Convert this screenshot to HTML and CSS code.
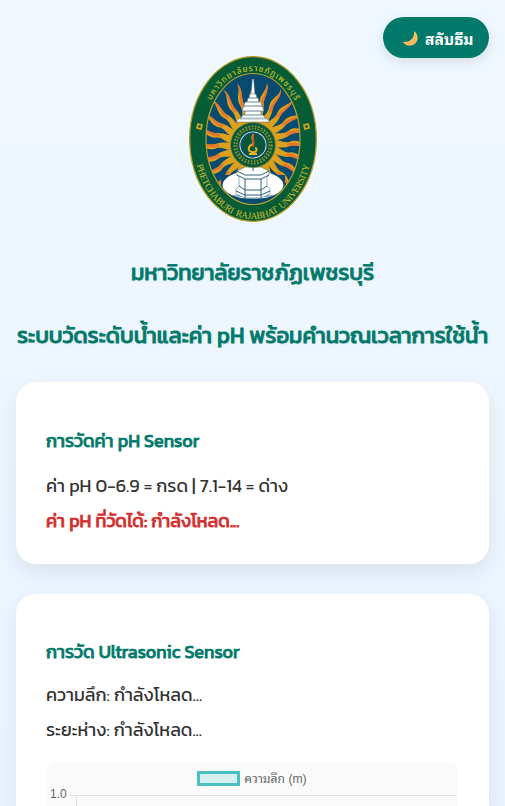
FILE: index.html
```html
<!DOCTYPE html>
<html lang="th">
<head>
<meta charset="utf-8">
<meta name="viewport" content="width=device-width, initial-scale=1">
<title>ระบบวัดระดับน้ำและค่า pH</title>
<link rel="stylesheet" href="styles.css">
</head>
<body>
<button class="theme-toggle" type="button">
  <svg class="moon" viewBox="0 0 17 17" aria-hidden="true"><path d="M12 1C19 6.500 15 15.600 7.500 15.600C4.300 15.600 2 14.200 1 11.800C8 13 12.800 8 12 1Z" fill="#ffc968"/><path d="M1 11.800C8 13.800 13.500 9 12.600 2C17.500 8.500 13 15.600 7.500 15.600C4.300 15.600 2 14.200 1 11.800Z" fill="#f6a94e" opacity=".5"/></svg>
  <span class="toggle-label">สลับธีม</span>
</button>
<header class="header">
  <svg class="emblem" viewBox="0 0 128 166" role="img">
    <defs>
      <clipPath id="inner"><ellipse cx="64" cy="83" rx="47" ry="65.500"/></clipPath>
      <path id="arcTop" d="M15.500 62A51 68 0 0 1 112.500 62"/>
      <path id="arcBottom" d="M5 95A59.500 78 0 0 0 123 95"/>
      <g id="ray">
        <path d="M-4 -18C-7 -31 0 -34 -4 -43C-6 -52 1 -56 -1 -64C4 -56 -1 -50 1 -42C4 -33 1 -29 4 -18Z" fill="#dda01a"/>
        <path d="M-1 -38C-5 -46 1 -51 -1 -64C4 -56 -1 -50 1 -38Z" fill="#e8752f"/>
      </g>
      <g id="quarter"><use href="#ray"/><use href="#ray" transform="rotate(15)"/><use href="#ray" transform="rotate(30)"/><use href="#ray" transform="rotate(45)"/><use href="#ray" transform="rotate(60)"/><use href="#ray" transform="rotate(75)"/></g>
    </defs>
    <ellipse cx="64" cy="83" rx="63.300" ry="82.300" fill="#065c35" stroke="#b59a22" stroke-width="1.300"/>
    <g clip-path="url(#inner)">
      <path d="M0 0H128V166H0Z" fill="#074b70"/>
      <g transform="translate(64 89) scale(.9 1)"><use href="#quarter"/><use href="#quarter" transform="rotate(90)"/><use href="#quarter" transform="rotate(180)"/><use href="#quarter" transform="rotate(270)"/></g>
      <path d="M32 119H96V150H32Z" fill="#074b70"/>
      <ellipse cx="64" cy="129" rx="30.500" ry="14" fill="#fff"/>
      <path d="M43 140H85M48 143H80" stroke="#074b70" stroke-width=".8"/>
    </g>
    <ellipse cx="64" cy="83" rx="47" ry="65.500" fill="none" stroke="#b9a12b" stroke-width="1.200"/>
    <g fill="#fff" stroke="#376386" stroke-width=".45">
      <path d="M63.300 23H64.700L66 39H62Z"/>
      <path d="M61 38H67L68 42H60ZM59 42H69L70 46H58ZM56 46H72L73 50H55ZM55 50H73L75 55H53ZM56 55H72V59H56ZM54 59H74L77 63H51ZM51 62H77L81 66H47Z"/>
      <path d="M48 115L56 111H72L80 115V119L78 121V130L81 133V138L72 142H56L47 138V133L50 130V121L48 119Z" stroke="#174f73"/>
      <path d="M48 115L56 119H72L80 115M48 119L56 123H72L80 119M56 123V142M72 123V142M50 130L56 134H72L78 130M47 135L56 139H72L81 135M64 111V115" fill="none" stroke="#174f73" stroke-width=".9"/>
    </g>
    <circle cx="64" cy="89" r="22.500" fill="#07583b" stroke="#7c8830" stroke-width=".7"/>
    <circle cx="64" cy="89" r="17.500" fill="none" stroke="#9c962c" stroke-width="4" stroke-dasharray="1.600 1.500"/>
    <circle cx="64" cy="89" r="17.500" fill="none" stroke="#17613a" stroke-width="1"/>
    <circle cx="64" cy="89" r="13" fill="#07583b" stroke="#d5dfdc" stroke-width="1.100"/>
    <circle cx="64" cy="89" r="11.700" fill="none" stroke="#104b75" stroke-width="1.400"/>
    <path d="M64.500 78C61 83 66 85 64 88C59 90 58 95 63 96C68 97 69 92 66 92M60 98H68" fill="none" stroke="#eeae25" stroke-width="1.900"/>
    <path d="M64.500 78C62 83 66 86 64 91" fill="none" stroke="#df4c2a" stroke-width="1.700"/>
    <g fill="none" stroke="#d9a61e" stroke-width="1.700"><path d="M9 68L13 69L12 73L8 72ZM119 68L115 69L116 73L120 72Z"/></g>
    <text class="seal-thai"><textPath href="#arcTop" startOffset="50%" text-anchor="middle" textLength="108">มหาวิทยาลัยราชภัฏเพชรบุรี</textPath></text>
    <text class="seal-latin"><textPath href="#arcBottom" startOffset="50%" text-anchor="middle" textLength="168" xml:space="preserve">PHETCHABURI  RAJABHAT  UNIVERSITY</textPath></text>
  </svg>
  <h2 class="title university">มหาวิทยาลัยราชภัฏเพชรบุรี</h2>
  <h2 class="title system">ระบบวัดระดับน้ำและค่า pH พร้อมคำนวณเวลาการใช้น้ำ</h2>
</header>
<main class="cards">
  <section class="card ph-card">
    <h3>การวัดค่า pH Sensor</h3>
    <p>ค่า pH 0-6.9 = กรด | 7.1-14 = ด่าง</p>
    <p class="reading">ค่า pH ที่วัดได้: กำลังโหลด...</p>
  </section>
  <section class="card depth-card">
    <h3>การวัด Ultrasonic Sensor</h3>
    <p>ความลึก: กำลังโหลด...</p>
    <p>ระยะห่าง: กำลังโหลด...</p>
    <div class="chart">
      <div class="legend"><i class="swatch"></i><span class="legend-label">ความลึก (m)</span></div>
      <div class="axis"><span class="tick">1.0</span><div class="plot"></div></div>
    </div>
  </section>
</main>
</body>
</html>
```

FILE: styles.css
```css
* { box-sizing: border-box; }
html { height: 100%; overflow: hidden; }
body {
  height: 806px; margin: 0; padding: 17px 16px 0; overflow: hidden;
  display: flex; flex-direction: column;
  background: linear-gradient(180deg, #f0f8ff, #eaf4ff);
  color: #333; font-family: Kanit, "Noto Sans Thai", "Noto Sans", sans-serif;
}
h2, h3, p { margin: 0; white-space: nowrap; }
.theme-toggle {
  flex: none; align-self: flex-end; width: 106px; height: 41px; padding: 0 14px 0 19px;
  display: flex; align-items: center; gap: 6px; border: 0; border-radius: 21px;
  color: #fff; background: #00796b; box-shadow: 0 4px 12px rgba(0,0,0,.1);
  font: bold 15.500px "Noto Sans Thai Looped", Loma, Garuda, "Noto Sans Thai", sans-serif; white-space: nowrap;
}
.moon { width: 17px; height: 17px; flex: none; margin-top: 2px; }
.header { flex: none; height: 326px; display: flex; flex-direction: column; align-items: center; margin-top: -2px; }
.emblem { width: 128px; height: 166px; flex: none; margin-left: 1px; }
.title { height: 63px; line-height: 63px; color: #00796b; font-size: 22.020px; font-weight: 400; -webkit-text-stroke: .85px #00796b; text-shadow: 1px 1px 2px rgba(0,0,0,.1); }
.university { margin-top: 19px; }
.seal-thai { fill: #dec72d; font: 8.500px "Noto Sans Thai", "Noto Sans", sans-serif; }
.seal-latin { fill: #d5bd29; font: 9.500px "Liberation Serif", serif; }
.cards { flex: 1; min-height: 0; display: flex; flex-direction: column; gap: 30px; }
.card { padding: 41px 30px 0; background: #fff; border-radius: 20px; box-shadow: 0 8px 20px rgba(0,0,0,.08); flex: none; }
.ph-card { height: 182px; }
.depth-card { height: 212px; padding-top: 40px; border-radius: 20px 20px 0 0; }
h3 { height: 35px; line-height: 35px; color: #00796b; font-size: 18px; font-weight: 400; -webkit-text-stroke: .75px #00796b; }
p { height: 35px; line-height: 35px; font-size: 18px; }
h3 + p { margin-top: 8px; }
.ph-card h3 + p { margin-top: 10px; }
.reading { color: #d32f2f; -webkit-text-stroke: .75px #d32f2f; }
.chart { height: 43px; overflow: hidden; margin-top: 16px; border-radius: 10px 10px 0 0; background: #fafafa; }
.legend { height: 31px; display: flex; align-items: center; justify-content: center; gap: 4px; padding-right: 1px; color: #666; font: 12.200px "Liberation Sans", "Noto Sans Thai Looped", Loma, Garuda, "Noto Sans Thai", sans-serif; }
.legend-label { margin-top: -3px; }
.swatch { width: 43px; height: 15px; border: 3px solid #4bc0c0; background: #d7efef; }
.axis { display: flex; padding-left: 4px; }
.tick { width: 19px; height: 14px; margin-top: -7px; color: #666; font: 12px/14px "Liberation Sans", sans-serif; }
.plot { width: 387px; height: 180px; margin-top: 1px; border-top: 1px solid #dedede; background: linear-gradient(#dedede,#dedede) 7px 0 / 1px 100% no-repeat; }
```
